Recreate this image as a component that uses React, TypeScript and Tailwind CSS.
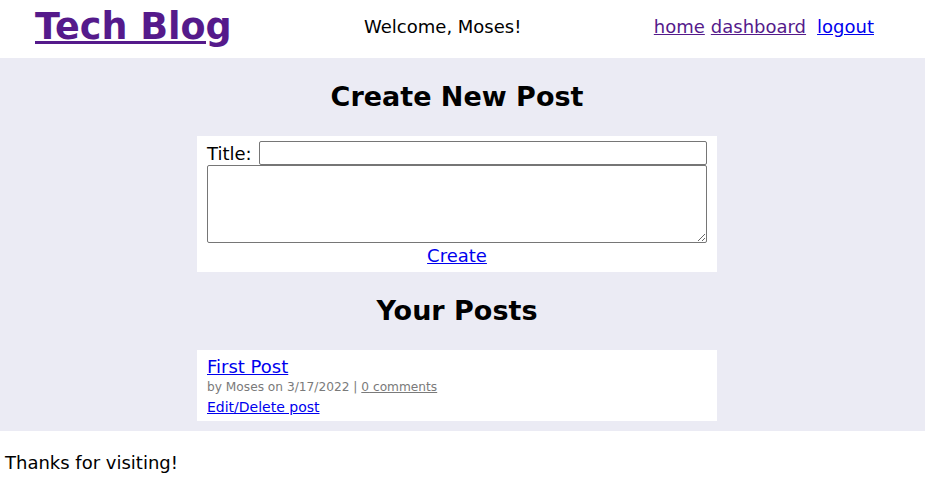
import { useState } from "react";

const posts = [
  { id: 1, title: "First Post", author: "Moses", date: "3/17/2022", comments: 0 },
];

function Header() {
  return (
    <header className="flex h-[58px] items-start justify-between bg-white pl-[35px] pr-[51px]">
      <a href="#" className="pt-[6px] text-[36.5px] font-bold leading-[42px] text-[#551a8b] underline">
        Tech Blog
      </a>
      <p className="pt-[16px] text-[18px] leading-[21px] text-black">Welcome, Moses!</p>
      <nav className="flex pt-[16px] text-[18px] leading-[21px]">
        <a href="#" className="text-[#551a8b] underline">home</a>
        <a href="#" className="ml-[6px] text-[#551a8b] underline">dashboard</a>
        <a href="#" className="ml-[11px] text-[#0000ee] underline">logout</a>
      </nav>
    </header>
  );
}

function NewPostForm() {
  const [title, setTitle] = useState("");
  const [body, setBody] = useState("");

  return (
    <form
      className="mx-auto flex w-[520px] flex-col bg-white px-[10px] pb-[6px] pt-[5px]"
      onSubmit={(e) => e.preventDefault()}
    >
      <div className="flex items-center">
        <label htmlFor="title" className="text-[18px] leading-[21px]">Title:</label>
        <input
          id="title"
          value={title}
          onChange={(e) => setTitle(e.target.value)}
          className="ml-[7px] h-[24px] flex-1 rounded-[2px] border border-[#767676] bg-white px-1 text-[14px] outline-none"
        />
      </div>
      <textarea
        value={body}
        onChange={(e) => setBody(e.target.value)}
        className="h-[78px] w-full rounded-[2px] border border-[#767676] bg-white p-1 text-[14px] outline-none"
      />
      <div className="mt-[2px] text-center text-[18px] leading-[21px]">
        <a href="#" className="text-[#0000ee] underline">Create</a>
      </div>
    </form>
  );
}

export default function App() {
  return (
    <div className="min-h-[489px] bg-white font-['DejaVu_Sans',Verdana,sans-serif] text-black">
      <Header />
      <main className="bg-[#ebebf4] pb-[10px] pr-[11px] pt-[23px]">
        <h2 className="mb-[23px] text-center text-[27px] font-bold leading-[32px]">Create New Post</h2>
        <NewPostForm />
        <h2 className="my-[23px] text-center text-[27px] font-bold leading-[32px]">Your Posts</h2>
        {posts.map((post) => (
          <article key={post.id} className="mx-auto w-[520px] bg-white px-[10px] pb-[5px] pt-[6px]">
            <a href="#" className="block w-fit text-[18px] leading-[21px] text-[#0000ee] underline">
              {post.title}
            </a>
            <p className="mt-[2px] text-[12.2px] leading-[16px] text-[#7a7a7a]">
              by {post.author} on {post.date} |{" "}
              <a href="#" className="underline">{post.comments} comments</a>
            </p>
            <a href="#" className="mt-[4px] block w-fit text-[14px] leading-[17px] text-[#0000ee] underline">
              Edit/Delete post
            </a>
          </article>
        ))}
      </main>
      <footer className="px-[5px] pt-[21px] text-[18px] leading-[21px]">Thanks for visiting!</footer>
    </div>
  );
}
